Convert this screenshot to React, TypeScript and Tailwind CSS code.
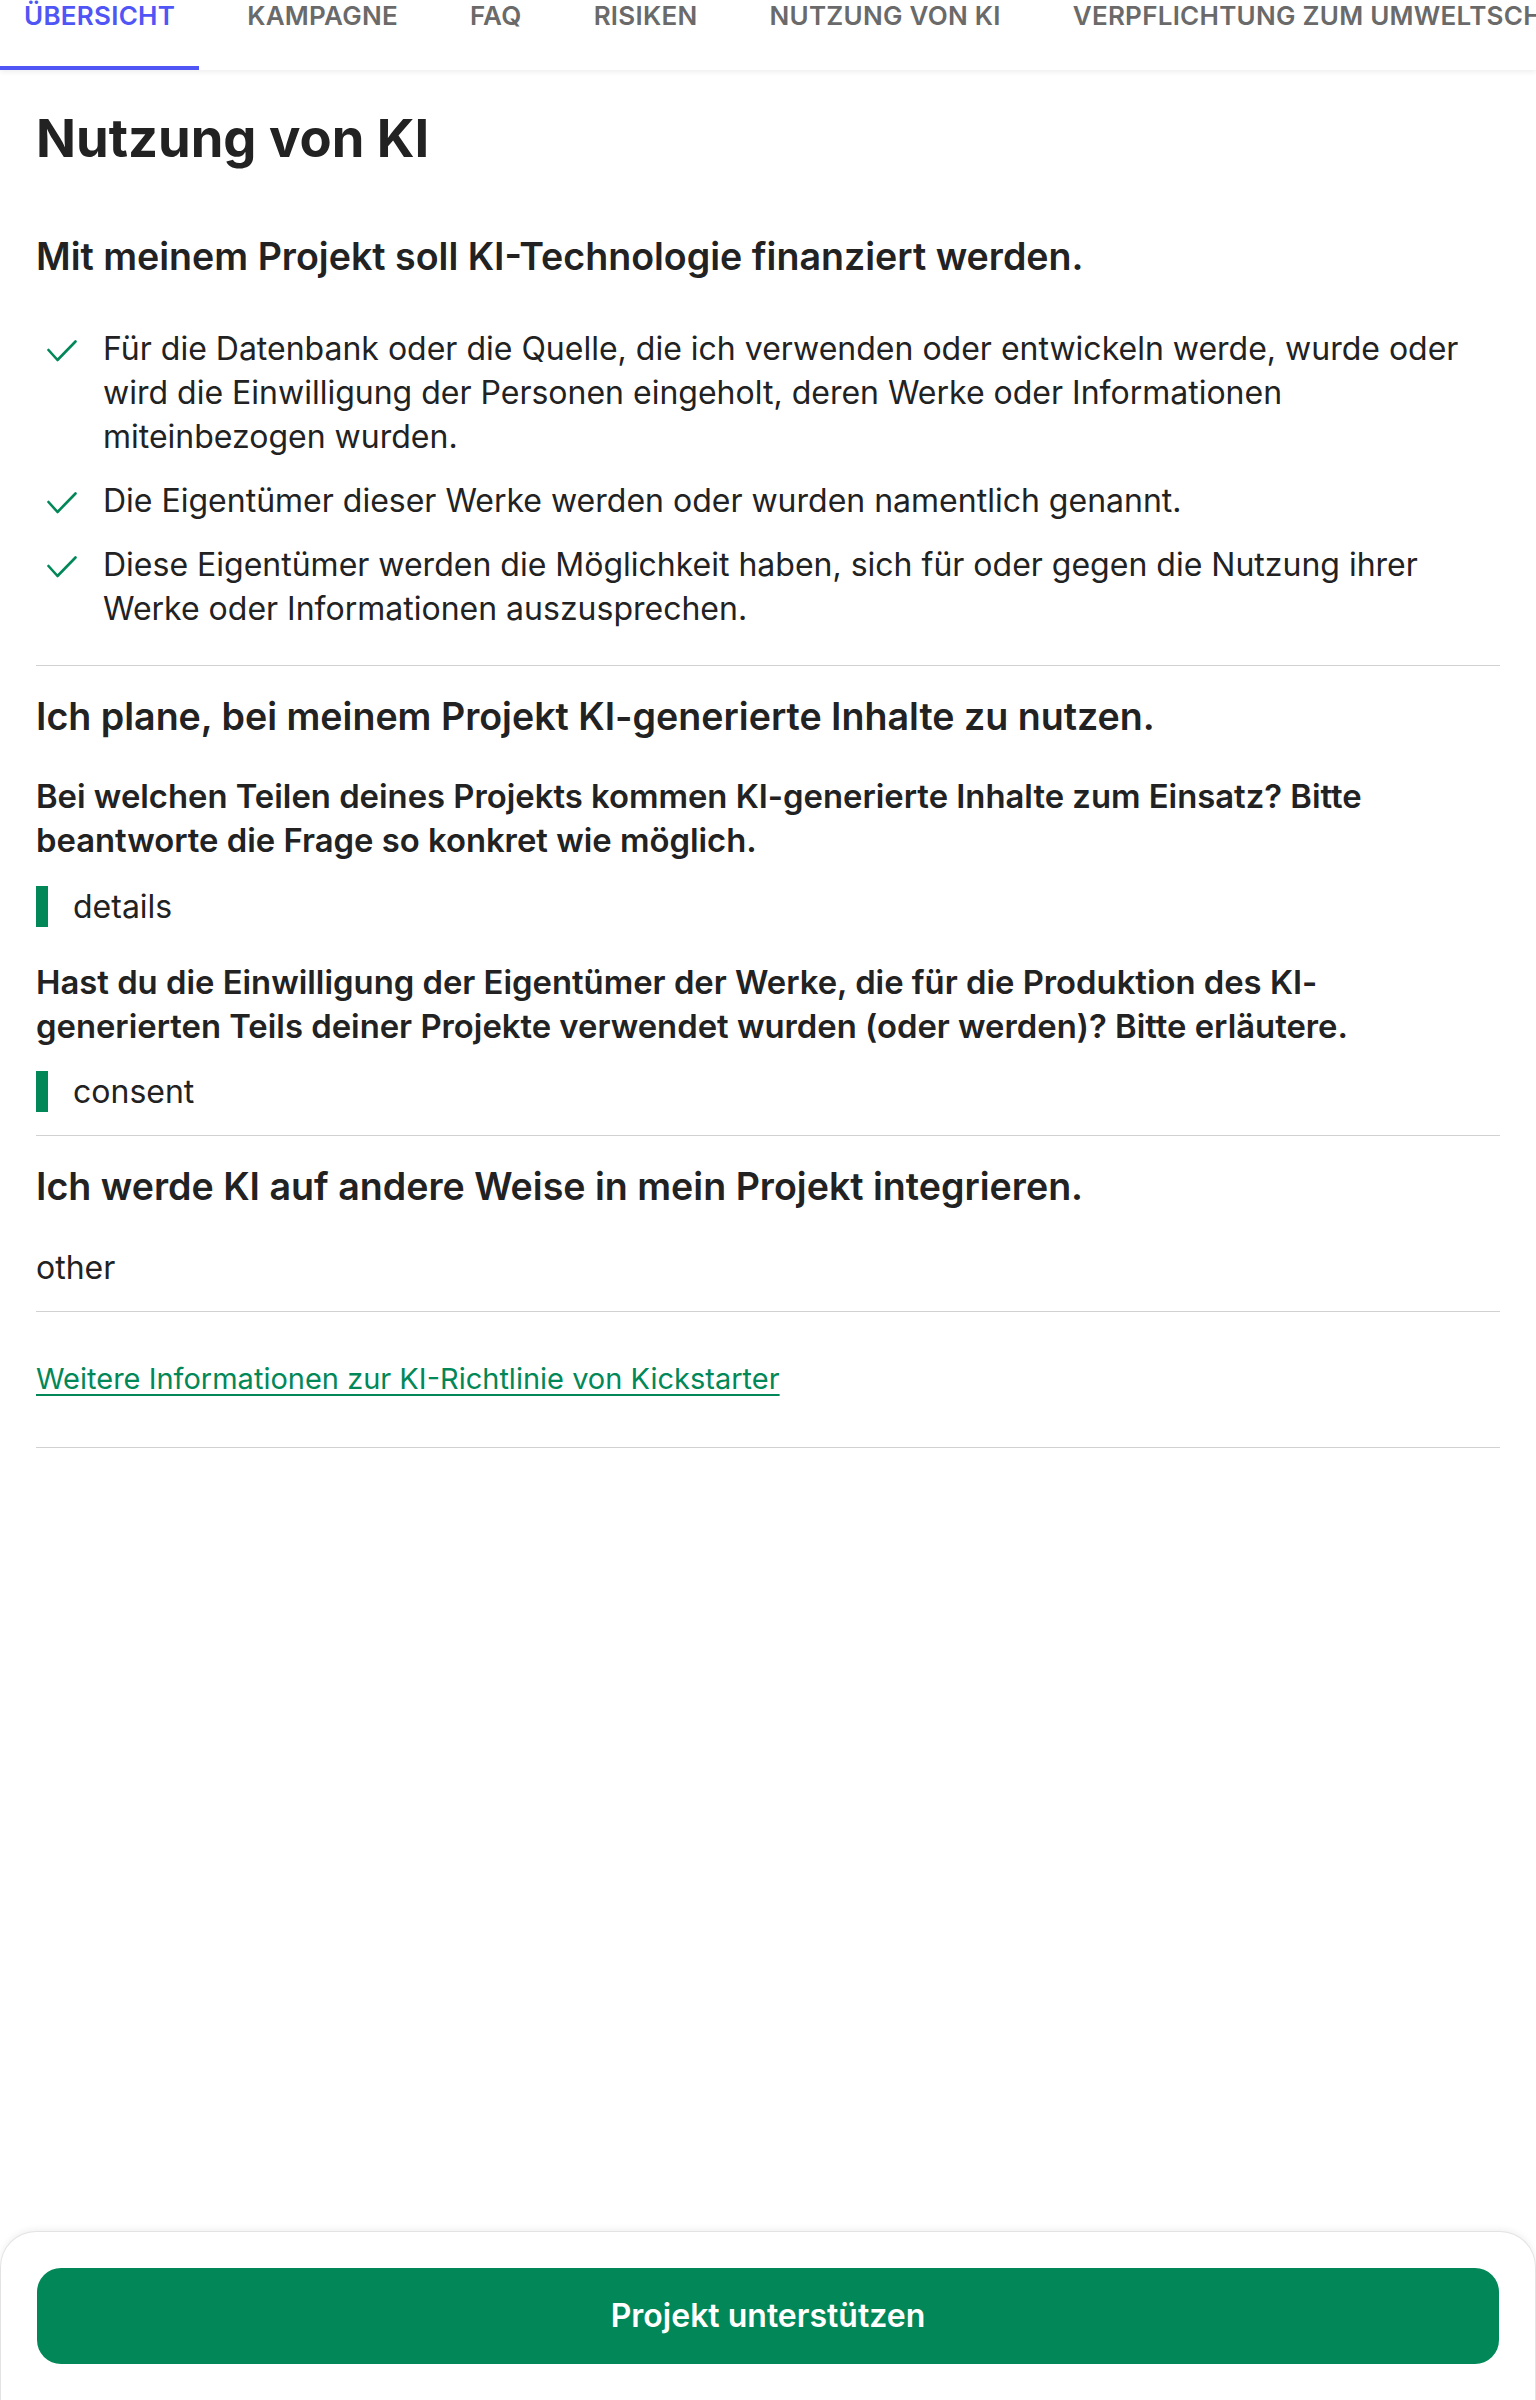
import React from 'react';

const tabs = [
  'ÜBERSICHT',
  'KAMPAGNE',
  'FAQ',
  'RISIKEN',
  'NUTZUNG VON KI',
  'VERPFLICHTUNG ZUM UMWELTSCHUTZ',
];

const checks = [
  'Für die Datenbank oder die Quelle, die ich verwenden oder entwickeln werde, wurde oder wird die Einwilligung der Personen eingeholt, deren Werke oder Informationen miteinbezogen wurden.',
  'Die Eigentümer dieser Werke werden oder wurden namentlich genannt.',
  'Diese Eigentümer werden die Möglichkeit haben, sich für oder gegen die Nutzung ihrer Werke oder Informationen auszusprechen.',
];

function Check() {
  return (
    <svg width="30" height="22" viewBox="0 0 30 22" fill="none" className="shrink-0 ml-[11px] mt-[13px]">
      <polyline points="1.5,10 10.5,20 28.5,1.5" stroke="#028858" strokeWidth="2.6" strokeLinecap="round" strokeLinejoin="round" />
    </svg>
  );
}

function Answer({ children }: { children: React.ReactNode }) {
  return (
    <div className="border-l-[12px] border-[#028858] pl-[25px] text-[32px] leading-[41px] text-[#222222]">
      {children}
    </div>
  );
}

export default function App() {
  return (
    <div className="min-h-screen flex flex-col bg-white text-[#222222]" style={{ fontFamily: 'Inter, "Noto Sans", sans-serif' }}>
      {/* Tabs */}
      <div className="h-[70px] flex gap-6 overflow-hidden whitespace-nowrap shadow-[0_2px_5px_rgba(0,0,0,0.07)] relative z-10">
        {tabs.map((t, i) => (
          <div
            key={t}
            className={`h-[70px] shrink-0 px-6 border-b-4 text-[26px] leading-[32px] font-semibold tracking-[0.01em] ${
              i === 0 ? 'border-[#5055f5] text-[#5055f5]' : 'border-transparent text-[#6a6a6a]'
            }`}
          >
            {t}
          </div>
        ))}
      </div>

      {/* Content */}
      <main className="px-9">
        <h1 className="mt-[38px] text-[52.5px] leading-[60px] font-bold">Nutzung von KI</h1>

        <h2 className="mt-[67px] text-[37.6px] leading-[44px] font-semibold">
          Mit meinem Projekt soll KI-Technologie finanziert werden.
        </h2>
        <ul className="mt-[48px] flex flex-col gap-[20px]">
          {checks.map((c) => (
            <li key={c} className="flex">
              <Check />
              <span className="ml-[26px] text-[32px] leading-[44px]">{c}</span>
            </li>
          ))}
        </ul>
        <div className="mt-[34px] h-px bg-[#d1d1d1]" />

        <h2 className="mt-[29px] text-[37.6px] leading-[44px] font-semibold">
          Ich plane, bei meinem Projekt KI-generierte Inhalte zu nutzen.
        </h2>
        <p className="mt-[35px] text-[32.8px] leading-[44px] font-semibold">
          Bei welchen Teilen deines Projekts kommen KI-generierte Inhalte zum Einsatz? Bitte beantworte die Frage so konkret wie möglich.
        </p>
        <div className="mt-[24px]">
          <Answer>details</Answer>
        </div>
        <p className="mt-[33px] text-[32.8px] leading-[44px] font-semibold">
          Hast du die Einwilligung der Eigentümer der Werke, die für die Produktion des KI-generierten Teils deiner Projekte verwendet wurden (oder werden)? Bitte erläutere.
        </p>
        <div className="mt-[23px]">
          <Answer>consent</Answer>
        </div>
        <div className="mt-[23px] h-px bg-[#d1d1d1]" />

        <h2 className="mt-[29px] text-[37.6px] leading-[44px] font-semibold">
          Ich werde KI auf andere Weise in mein Projekt integrieren.
        </h2>
        <p className="mt-[37px] text-[32px] leading-[44px]">other</p>
        <div className="mt-[21px] h-px bg-[#d1d1d1]" />

        <div className="mt-[47px] text-[29px] leading-[40px]">
          <a href="#" className="text-[#028858] underline decoration-2 underline-offset-[5px]">
            Weitere Informationen zur KI-Richtlinie von Kickstarter
          </a>
        </div>
        <div className="mt-[48px] h-px bg-[#d1d1d1]" />
      </main>

      {/* Sticky footer */}
      <div className="mt-auto rounded-t-[36px] border-t border-x border-[#e3e3e3] shadow-[0_-2px_6px_rgba(0,0,0,0.06)] bg-white px-9 py-9">
        <button className="w-full h-[96px] rounded-[24px] bg-[#028858] text-white text-[32px] font-semibold">
          Projekt unterstützen
        </button>
      </div>
    </div>
  );
}
